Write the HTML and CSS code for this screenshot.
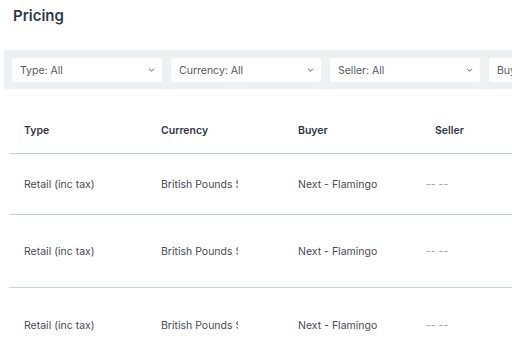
FILE: index.html
```html
<!DOCTYPE html>
<html>
<head>
<meta charset="utf-8">
<link rel="stylesheet" href="styles.css">
</head>
<body>
<div class="page">
  <h1 class="title">Pricing</h1>
  <div class="filters">
    <div class="select"><span>Type: All</span><svg class="chev" viewBox="0 0 8 5" width="7" height="4"><path d="M1 1l3 3 3-3" fill="none" stroke="#555" stroke-width="1.2"/></svg></div>
    <div class="select"><span>Currency: All</span><svg class="chev" viewBox="0 0 8 5" width="7" height="4"><path d="M1 1l3 3 3-3" fill="none" stroke="#555" stroke-width="1.2"/></svg></div>
    <div class="select"><span>Seller: All</span><svg class="chev" viewBox="0 0 8 5" width="7" height="4"><path d="M1 1l3 3 3-3" fill="none" stroke="#555" stroke-width="1.2"/></svg></div>
    <div class="select"><span>Buyer: All</span><svg class="chev" viewBox="0 0 8 5" width="7" height="4"><path d="M1 1l3 3 3-3" fill="none" stroke="#555" stroke-width="1.2"/></svg></div>
  </div>
  <div class="table">
    <div class="row head">
      <div class="cell">Type</div>
      <div class="cell">Currency</div>
      <div class="cell">Buyer</div>
      <div class="cell">Seller</div>
    </div>
    <div class="row r1">
      <div class="cell">Retail (inc tax)</div>
      <div class="cell clip"><span>British Pounds Sterling</span></div>
      <div class="cell">Next - Flamingo</div>
      <div class="cell dash">-- --</div>
    </div>
    <div class="row r2">
      <div class="cell">Retail (inc tax)</div>
      <div class="cell clip"><span>British Pounds Sterling</span></div>
      <div class="cell">Next - Flamingo</div>
      <div class="cell dash">-- --</div>
    </div>
    <div class="row r3">
      <div class="cell">Retail (inc tax)</div>
      <div class="cell clip"><span>British Pounds Sterling</span></div>
      <div class="cell">Next - Flamingo</div>
      <div class="cell dash">-- --</div>
    </div>
  </div>
</div>
</body>
</html>
```
FILE: styles.css
```css
html, body {
  margin: 0;
  padding: 0;
  background: #ffffff;
  overflow: hidden;
}
body {
  font-family: Inter, "Noto Sans", sans-serif;
  color: #4a4a55;
  width: 512px;
  height: 359px;
}
.page {
  width: 760px;
}
.title {
  margin: 0;
  padding: 6px 0 0 13px;
  height: 50px;
  box-sizing: border-box;
  font-size: 15px;
  font-weight: 600;
  color: #2f3a48;
  line-height: 20px;
}
.filters {
  margin-left: 4px;
  background: #eef1f4;
  display: flex;
  gap: 9px;
  padding: 8px 8px 7px 8px;
}
.select {
  flex: 0 0 150px;
  height: 24px;
  background: #fff;
  border-radius: 3px;
  display: flex;
  align-items: center;
  justify-content: space-between;
  padding: 0 7px 0 8px;
  box-sizing: border-box;
  font-size: 10.5px;
  color: #555a66;
}
.chev {
  display: block;
}
.table {
  margin-left: 9px;
  margin-top: 18px;
}
.row {
  display: grid;
  grid-template-columns: 137px 137px 137px 137px 137px;
  align-items: center;
  border-bottom: 1px solid #c9d2de;
}
.head {
  height: 46px;
}
.r1 { height: 60px; }
.r2 { height: 72px; }
.r3 { height: 74px; border-bottom: none; }
.cell {
  padding-left: 15px;
  font-size: 10.5px;
  white-space: nowrap;
}
.head .cell {
  font-weight: 600;
  color: #333845;
}
.clip {
  overflow: hidden;
  width: 77px;
  padding-left: 0;
  margin-left: 15px;
}
.dash {
  padding-left: 6px;
  color: #9a9ca4;
}
```
